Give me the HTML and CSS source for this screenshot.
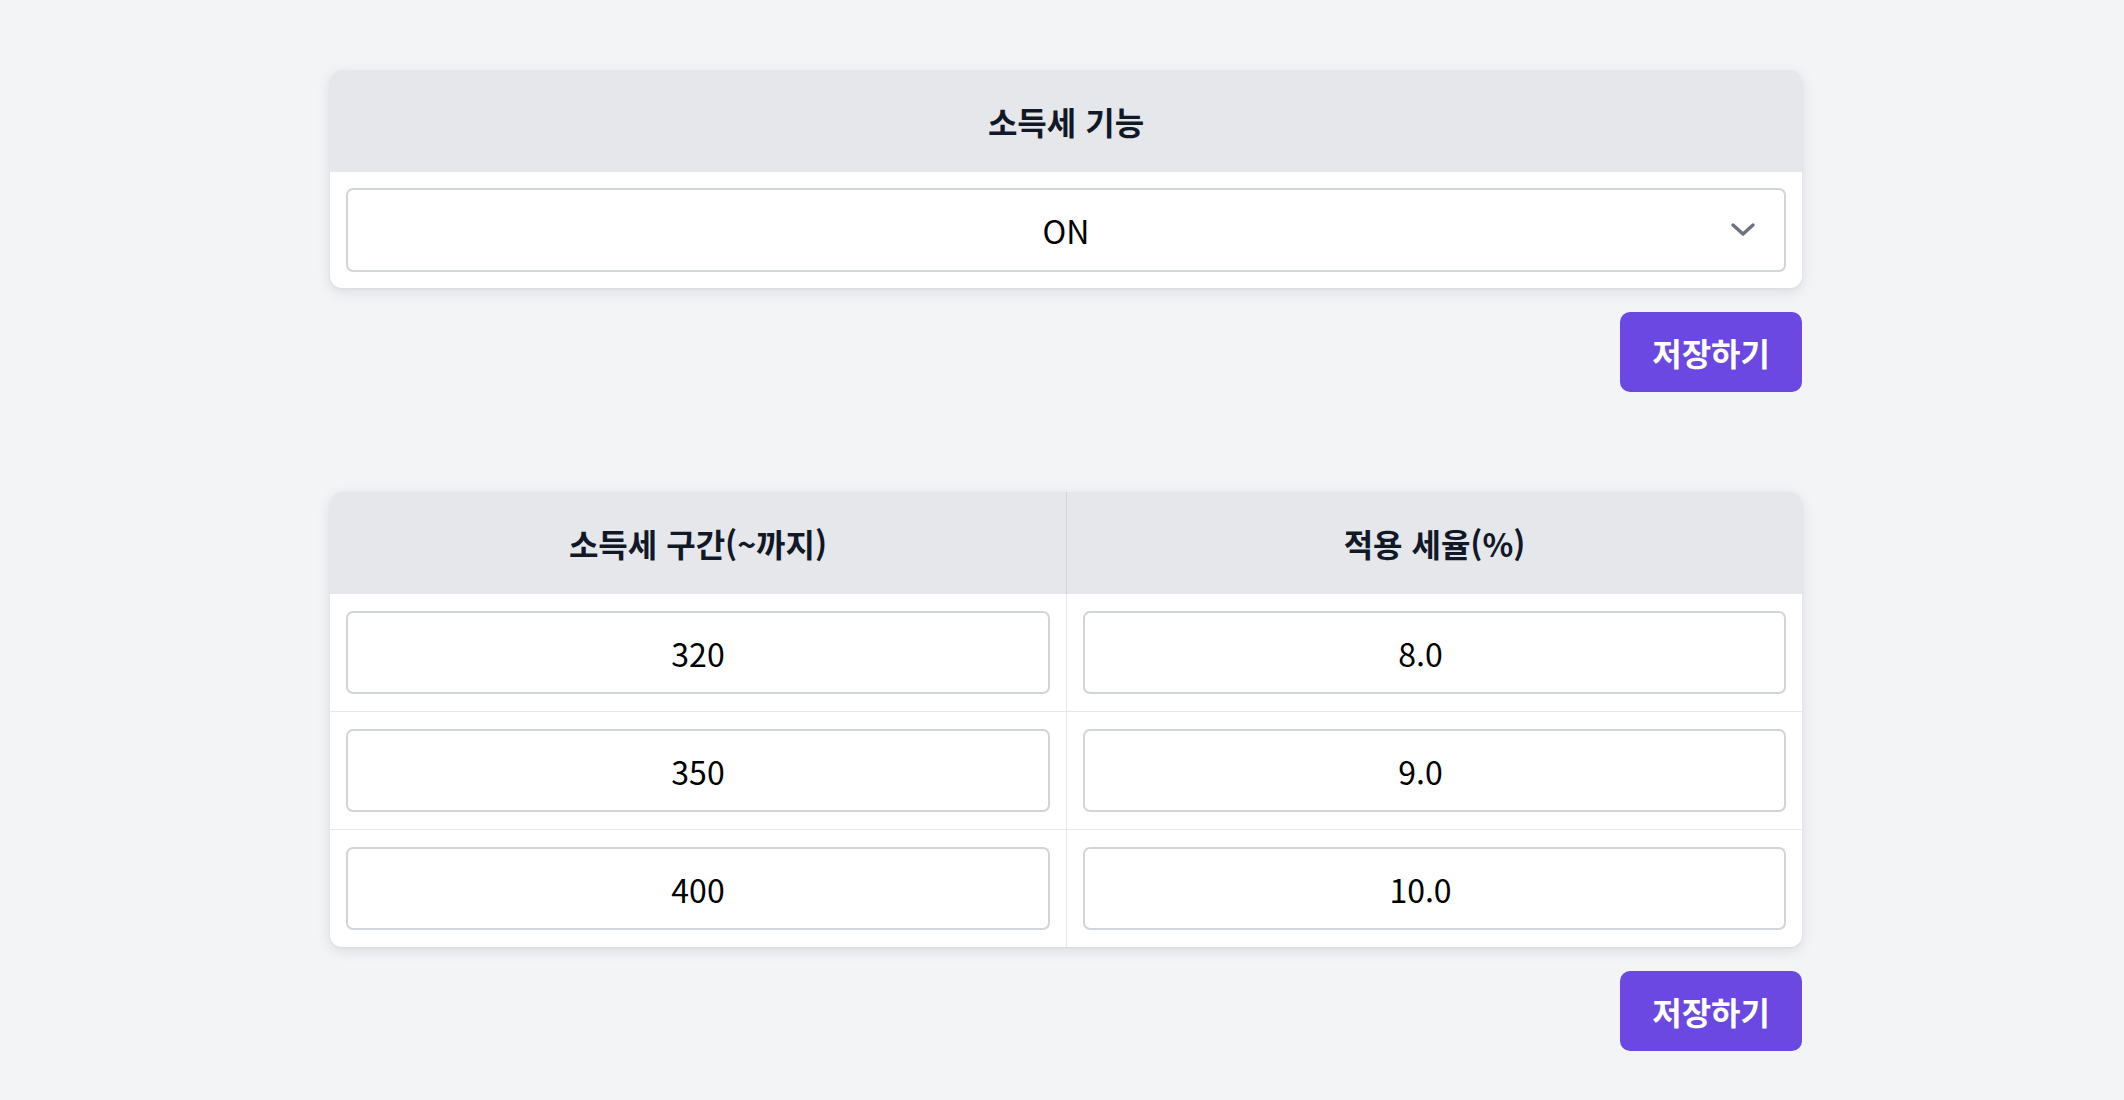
FILE: index.html
```html
<!DOCTYPE html>
<html lang="ko">
<head>
<meta charset="utf-8">
<title>소득세 설정</title>
<link rel="stylesheet" href="styles.css">
</head>
<body>
<main class="page">
  <section class="section">
    <div class="card">
      <div class="card-head">소득세 기능</div>
      <div class="card-body">
        <div class="select-wrap">
          <select class="select">
            <option>ON</option>
            <option>OFF</option>
          </select>
          <svg class="chevron" width="26" height="16" viewBox="0 0 26 16" aria-hidden="true">
            <path d="M3 3 L13 12 L23 3" fill="none" stroke="#6b7280" stroke-width="3.4" stroke-linecap="round" stroke-linejoin="round"/>
          </svg>
        </div>
      </div>
    </div>
    <div class="actions"><button class="btn">저장하기</button></div>
  </section>

  <section class="section section-gap">
    <div class="card">
      <div class="grid">
        <div class="th">소득세 구간(~까지)</div>
        <div class="th th-right">적용 세율(%)</div>

        <div class="td"><input class="field" value="320"></div>
        <div class="td td-right"><input class="field field-rate" value="8.0"></div>

        <div class="td"><input class="field" value="350"></div>
        <div class="td td-right"><input class="field field-rate" value="9.0"></div>

        <div class="td td-last"><input class="field" value="400"></div>
        <div class="td td-right td-last"><input class="field field-rate" value="10.0"></div>
      </div>
    </div>
    <div class="actions"><button class="btn">저장하기</button></div>
  </section>
</main>
</body>
</html>
```

FILE: styles.css
```css
* {
  box-sizing: border-box;
}

html, body {
  margin: 0;
  padding: 0;
  background: #f3f4f6;
}

body {
  font-family: "Noto Sans CJK KR", "Noto Sans", sans-serif;
  color: #111827;
  height: 1100px;
  overflow: hidden;
}

.page {
  width: 1472px;
  margin: 0 auto;
  padding-top: 70px;
  position: relative;
  left: 4px;
}

.section-gap {
  margin-top: 100px;
}

.card {
  background: #ffffff;
  border-radius: 12px;
  box-shadow: 0 4px 14px rgba(17, 24, 39, 0.10), 0 1px 3px rgba(17, 24, 39, 0.05);
  overflow: hidden;
}

.card-head {
  height: 102px;
  background: #e5e7eb;
  display: flex;
  align-items: center;
  justify-content: center;
  font-size: 32px;
  font-weight: 700;
  color: #111827;
}

.card-body {
  padding: 16px;
}

.select-wrap {
  position: relative;
}

.select {
  display: block;
  width: 100%;
  height: 84px;
  border: 2px solid #d1d5db;
  border-radius: 7px;
  background: #ffffff;
  font-family: "Noto Sans CJK KR", "Noto Sans", sans-serif;
  font-size: 32px;
  color: #000000;
  text-align: center;
  text-align-last: center;
  -webkit-appearance: none;
  appearance: none;
  outline: none;
}

.chevron {
  position: absolute;
  right: 30px;
  top: 34px;
  pointer-events: none;
}

.actions {
  display: flex;
  justify-content: flex-end;
  margin-top: 24px;
}

.btn {
  height: 80px;
  padding: 0 32px;
  border: none;
  border-radius: 10px;
  background: #6a48e1;
  color: #ffffff;
  font-family: "Noto Sans CJK KR", "Noto Sans", sans-serif;
  font-size: 32px;
  font-weight: 700;
  cursor: pointer;
}

.grid {
  display: grid;
  grid-template-columns: 1fr 1fr;
}

.th {
  height: 102px;
  background: #e5e7eb;
  display: flex;
  align-items: center;
  justify-content: center;
  font-size: 32px;
  font-weight: 700;
  color: #111827;
}

.th-right {
  border-left: 1px solid #d1d5db;
}

.td {
  padding: 17px 16px;
  border-bottom: 1px solid #e5e7eb;
}

.td-right {
  border-left: 1px solid #e5e7eb;
}

.td-last {
  border-bottom: none;
}

.field {
  display: block;
  width: 100%;
  height: 83px;
  border: 2px solid #d1d5db;
  border-radius: 7px;
  background: #ffffff;
  font-family: "Noto Sans CJK KR", "Noto Sans", sans-serif;
  font-size: 32px;
  color: #000000;
  text-align: center;
  outline: none;
  padding: 0 12px;
}

.field-rate {
  padding-right: 40px;
}
```
